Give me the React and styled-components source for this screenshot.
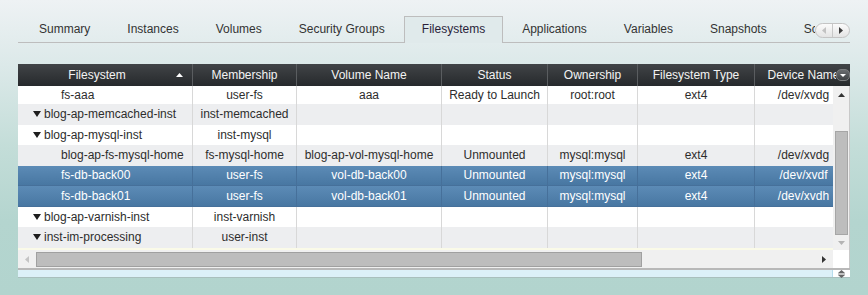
import styled, { createGlobalStyle, css } from "styled-components";

const GlobalStyle = createGlobalStyle`
  html, body {
    margin: 0;
    padding: 0;
    height: 100%;
  }
  body {
    background: linear-gradient(180deg, #eef2f4 0%, #dce9e9 22%, #c3ddd8 50%, #b4d5cf 75%, #b2d4ce 100%);
    font-family: "Liberation Sans", Arial, sans-serif;
    font-size: 12px;
    color: #2d2d2d;
  }
`;

const Page = styled.div`
  width: 868px;
  height: 295px;
  box-sizing: border-box;
  padding: 16px 18px 0 18px;
`;

const TabBar = styled.div`
  position: relative;
  height: 26px;
  border-bottom: 1px solid #bdbdbd;
`;

const TabList = styled.div`
  display: flex;
  align-items: flex-start;
  gap: 1px;
  width: 797px;
  height: 27px;
  padding-left: 3px;
  box-sizing: border-box;
  overflow: hidden;
`;

const Tab = styled.div`
  flex: none;
  height: 26px;
  box-sizing: border-box;
  padding: 0 17px;
  line-height: 25px;
  border: 1px solid transparent;
  border-bottom: none;
  color: #333;
  white-space: nowrap;
  ${(p) =>
    p.active &&
    css`
      height: 27px;
      border-color: #bdbdbd;
      background: #e0eaeb;
      color: #2a1f3a;
    `}
`;

const TabScroller = styled.div`
  position: absolute;
  right: 0;
  top: 7px;
  width: 33px;
  height: 13px;
  display: flex;
  border: 1px solid #c4c4c4;
  border-radius: 8px;
  background: linear-gradient(#fbfbfb, #e4e4e4);
  overflow: hidden;
`;

const ScrollerHalf = styled.div`
  flex: 1;
  display: flex;
  align-items: center;
  justify-content: center;
  & + & {
    border-left: 1px solid #c8c8c8;
  }
`;

const Grid = styled.div`
  width: 832px;
  margin-top: 21px;
`;

const HeaderRow = styled.div`
  display: flex;
  height: 22px;
  background: linear-gradient(#414447, #26292c);
`;

const HeaderCells = styled.div`
  flex: 1;
  display: flex;
  overflow: hidden;
`;

const HeaderCell = styled.div`
  flex: 0 0 ${(p) => p.w}px;
  position: relative;
  box-sizing: border-box;
  border-right: 1px solid #5a5d60;
  padding-right: ${(p) => (p.sorted ? 16 : 0)}px;
  line-height: 22px;
  text-align: center;
  color: #f3f3f3;
  white-space: nowrap;
`;

const SortMark = styled.svg`
  position: absolute;
  right: 9px;
  top: 9px;
`;

const HeaderCorner = styled.div`
  flex: 0 0 14px;
  display: flex;
  align-items: center;
  justify-content: flex-start;
`;

const MenuButton = styled.div`
  width: 12px;
  height: 10px;
  border-radius: 5px;
  border: 1px solid #7a7c7e;
  background: linear-gradient(#6a6d70, #3e4144);
  display: flex;
  align-items: center;
  justify-content: center;
`;

const Body = styled.div`
  display: flex;
  height: 164px;
`;

const Rows = styled.div`
  width: 815px;
  overflow: hidden;
  background: #fafae8;
`;

const Row = styled.div`
  display: flex;
  height: ${(p) => p.h}px;
  background: ${(p) => (p.alt ? "#edeef0" : "#ffffff")};
  ${(p) =>
    p.selected &&
    css`
      background: linear-gradient(#5c8bb6, #4877a2);
      color: #ffffff;
      border-bottom: 1px solid #46709a;
      box-sizing: border-box;
    `}
`;

const Cell = styled.div`
  flex: 0 0 ${(p) => p.w}px;
  box-sizing: border-box;
  display: flex;
  align-items: center;
  justify-content: ${(p) => (p.indent != null ? "flex-start" : "center")};
  padding-left: ${(p) => p.indent || 0}px;
  border-right: 1px solid ${(p) => (p.selected ? "#46709a" : "#d8d8d8")};
  white-space: nowrap;
  overflow: hidden;
`;

const Toggle = styled.svg`
  flex: none;
  margin-right: 3px;
`;

const VScroll = styled.div`
  flex: 0 0 17px;
  display: flex;
  flex-direction: column;
  align-items: center;
  background: #f0f0f0;
  border-right: 1px solid #c9c9c9;
  box-sizing: border-box;
`;

const ArrowBox = styled.div`
  flex: 0 0 ${(p) => p.size}px;
  display: flex;
  align-items: center;
  justify-content: center;
`;

const VThumb = styled.div`
  width: 13px;
  height: 104px;
  margin-top: 28px;
  box-sizing: border-box;
  border: 1px solid #a6a6a6;
  background: #bdbdbd;
`;

const Spacer = styled.div`
  flex: 1;
`;

const HScrollRow = styled.div`
  display: flex;
  height: 18px;
`;

const HTrack = styled.div`
  flex: 0 0 815px;
  display: flex;
  align-items: center;
  background: #f0f0f0;
`;

const HThumb = styled.div`
  width: 606px;
  height: 15px;
  box-sizing: border-box;
  border: 1px solid #a0a0a0;
  background: #bdbdbd;
`;

const Corner = styled.div`
  flex: 1;
  background: #ffffff;
  border-right: 1px solid #c9c9c9;
`;

const Footer = styled.div`
  display: flex;
  height: 7px;
  border-top: 2px solid #b8b8b8;
  border-bottom: 1px solid #a9bfbd;
  background: #dcf0f8;
`;

const FooterFill = styled.div`
  flex: 0 0 814px;
  border-right: 1px solid #b6dcec;
`;

const ResizeHandle = styled.div`
  flex: 1;
  display: flex;
  align-items: center;
  justify-content: center;
  background: #ffffff;
`;

const columns = [
  { key: "fs", label: "Filesystem", w: 175 },
  { key: "m", label: "Membership", w: 104 },
  { key: "v", label: "Volume Name", w: 145 },
  { key: "s", label: "Status", w: 106 },
  { key: "o", label: "Ownership", w: 90 },
  { key: "t", label: "Filesystem Type", w: 117 },
  { key: "d", label: "Device Name", w: 98 },
];

const rows = [
  { fs: "fs-aaa", m: "user-fs", v: "aaa", s: "Ready to Launch", o: "root:root", t: "ext4", d: "/dev/xvdg", h: 18 },
  { fs: "blog-ap-memcached-inst", group: true, m: "inst-memcached" },
  { fs: "blog-ap-mysql-inst", group: true, m: "inst-mysql" },
  { fs: "blog-ap-fs-mysql-home", m: "fs-mysql-home", v: "blog-ap-vol-mysql-home", s: "Unmounted", o: "mysql:mysql", t: "ext4", d: "/dev/xvdg" },
  { fs: "fs-db-back00", selected: true, m: "user-fs", v: "vol-db-back00", s: "Unmounted", o: "mysql:mysql", t: "ext4", d: "/dev/xvdf" },
  { fs: "fs-db-back01", selected: true, m: "user-fs", v: "vol-db-back01", s: "Unmounted", o: "mysql:mysql", t: "ext4", d: "/dev/xvdh" },
  { fs: "blog-ap-varnish-inst", group: true, m: "inst-varnish" },
  { fs: "inst-im-processing", group: true, m: "user-inst" },
];

const tabs = ["Summary", "Instances", "Volumes", "Security Groups", "Filesystems", "Applications", "Variables", "Snapshots", "Scripts"];

const Tri = ({ dir, color, w = 7, h = 4 }) => {
  const paths = {
    up: `M0 ${h} L${w / 2} 0 L${w} ${h}Z`,
    down: `M0 0 L${w} 0 L${w / 2} ${h}Z`,
    left: `M${w} 0 L0 ${h / 2} L${w} ${h}Z`,
    right: `M0 0 L${w} ${h / 2} L0 ${h}Z`,
  };
  return (
    <svg width={w} height={h} viewBox={`0 0 ${w} ${h}`}>
      <path d={paths[dir]} fill={color} />
    </svg>
  );
};

const App = () => {
  return (
    <Page>
      <GlobalStyle />
      <TabBar>
        <TabList>
          {tabs.map((t) => (
            <Tab key={t} active={t === "Filesystems"}>
              {t}
            </Tab>
          ))}
        </TabList>
        <TabScroller>
          <ScrollerHalf>
            <Tri dir="left" color="#c2c2c2" w={4} h={7} />
          </ScrollerHalf>
          <ScrollerHalf>
            <Tri dir="right" color="#3c3c3c" w={4} h={7} />
          </ScrollerHalf>
        </TabScroller>
      </TabBar>

      <Grid>
        <HeaderRow>
          <HeaderCells>
            {columns.map((c) => (
              <HeaderCell key={c.key} w={c.w} sorted={c.key === "fs"}>
                {c.label}
                {c.key === "fs" && (
                  <SortMark width="7" height="4" viewBox="0 0 7 4">
                    <path d="M0 4 L3.5 0 L7 4Z" fill="#ffffff" />
                  </SortMark>
                )}
              </HeaderCell>
            ))}
          </HeaderCells>
          <HeaderCorner>
            <MenuButton>
              <Tri dir="down" color="#ffffff" w={6} h={3} />
            </MenuButton>
          </HeaderCorner>
        </HeaderRow>

        <Body>
          <Rows>
            {rows.map((r, i) => (
              <Row key={r.fs} h={r.h || 20.5} alt={i % 2 === 1} selected={r.selected}>
                {columns.map((c) =>
                  c.key === "fs" ? (
                    <Cell key={c.key} w={c.w} indent={r.group ? 15 : 43} selected={r.selected}>
                      {r.group && (
                        <Toggle width="8" height="6" viewBox="0 0 8 6">
                          <path d="M0 0 H8 L4 6Z" fill="#1e1e1e" />
                        </Toggle>
                      )}
                      {r.fs}
                    </Cell>
                  ) : (
                    <Cell key={c.key} w={c.w} selected={r.selected}>
                      {r[c.key] || ""}
                    </Cell>
                  )
                )}
              </Row>
            ))}
          </Rows>
          <VScroll>
            <ArrowBox size={17}>
              <Tri dir="up" color="#333333" />
            </ArrowBox>
            <VThumb />
            <Spacer />
            <ArrowBox size={14}>
              <Tri dir="down" color="#b4b4b4" />
            </ArrowBox>
          </VScroll>
        </Body>

        <HScrollRow>
          <HTrack>
            <ArrowBox size={18}>
              <Tri dir="left" color="#c4c4c4" w={4} h={7} />
            </ArrowBox>
            <HThumb />
            <Spacer />
            <ArrowBox size={18}>
              <Tri dir="right" color="#333333" w={4} h={7} />
            </ArrowBox>
          </HTrack>
          <Corner />
        </HScrollRow>

        <Footer>
          <FooterFill />
          <ResizeHandle>
            <svg width="7" height="8" viewBox="0 0 7 8">
              <path d="M0 3 L3.5 0 L7 3Z M0 5 L7 5 L3.5 8Z" fill="#666" />
              <rect x="0" y="3.6" width="7" height="0.8" fill="#666" />
            </svg>
          </ResizeHandle>
        </Footer>
      </Grid>
    </Page>
  );
};

export default App;
